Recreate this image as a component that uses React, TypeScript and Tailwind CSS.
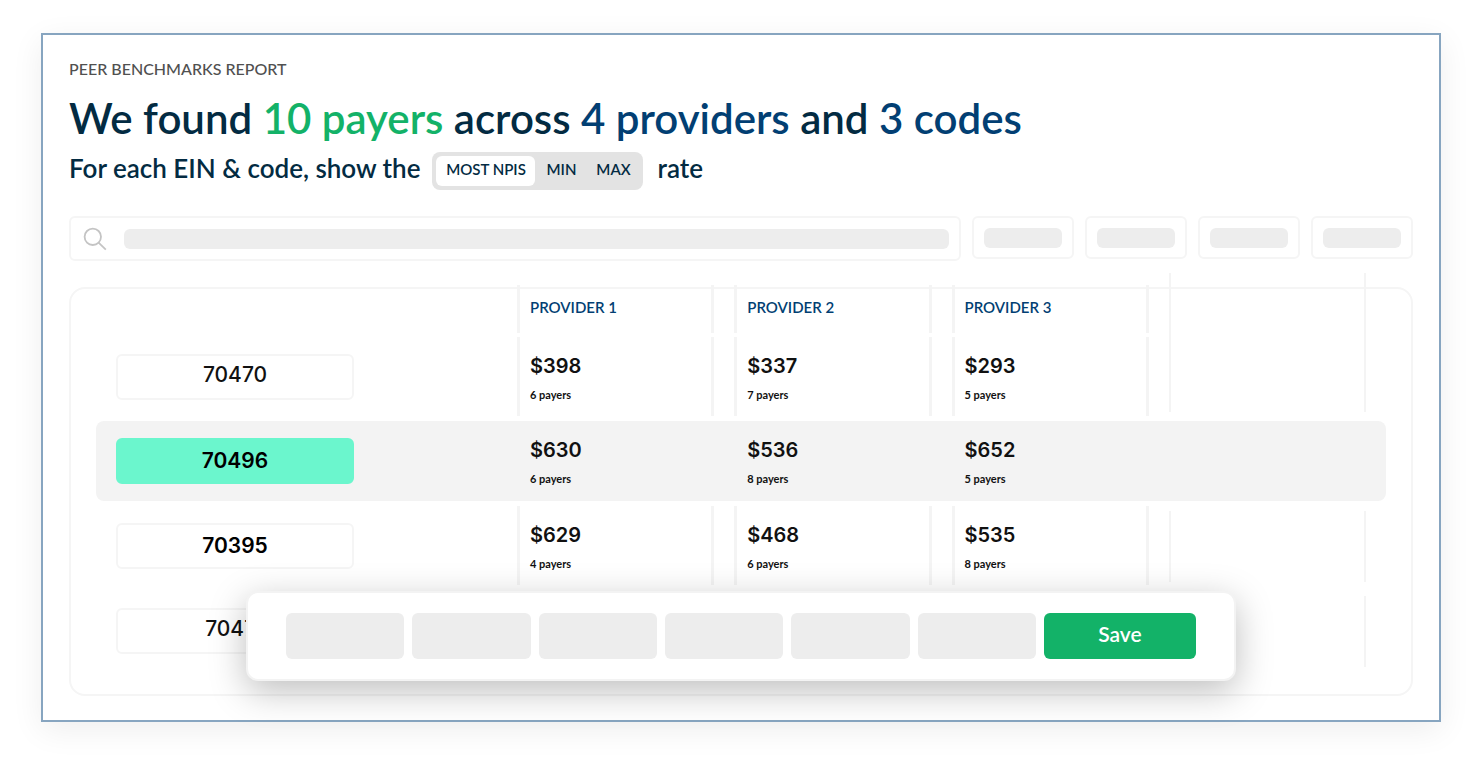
import React from 'react';

interface Rate {
  amount: string;
  payers: string;
}

interface CodeRow {
  code: string;
  rates: Rate[];
  selected?: boolean;
  bold?: boolean;
}

const providers = ['PROVIDER 1', 'PROVIDER 2', 'PROVIDER 3'];

const rows: CodeRow[] = [
  {
    code: '70470',
    rates: [
      { amount: '$398', payers: '6 payers' },
      { amount: '$337', payers: '7 payers' },
      { amount: '$293', payers: '5 payers' },
    ],
  },
  {
    code: '70496',
    selected: true,
    bold: true,
    rates: [
      { amount: '$630', payers: '6 payers' },
      { amount: '$536', payers: '8 payers' },
      { amount: '$652', payers: '5 payers' },
    ],
  },
  {
    code: '70395',
    bold: true,
    rates: [
      { amount: '$629', payers: '4 payers' },
      { amount: '$468', payers: '6 payers' },
      { amount: '$535', payers: '8 payers' },
    ],
  },
  { code: '70471', rates: [] },
];

const filters = ['Filter 1', 'Filter 2', 'Filter 3', 'Filter 4'];
const actions = ['Action 1', 'Action 2', 'Action 3', 'Action 4', 'Action 5', 'Action 6'];

const ReportHeader: React.FC = () => (
  <header>
    <p className="text-base leading-[22px] font-medium text-[#505050]">PEER BENCHMARKS REPORT</p>
    <h1 className="mt-3 text-[42px] leading-[52px] font-semibold text-[#032b42]">
      We found <span className="text-[#13b268]">10 payers</span> across{' '}
      <span className="text-[#023f73]">4 providers</span> and <span className="text-[#023f73]">3 codes</span>
    </h1>
    <div className="mt-2 flex items-start text-[26px] leading-8 font-semibold text-[#032b42]">
      <span>For each EIN &amp; code, show the</span>
      <div className="mr-[14px] ml-3 flex h-[38px] rounded-lg bg-[#e3e3e3] p-1 text-[15px] leading-[26px]">
        <button className="flex w-[99px] justify-center rounded-md bg-white">MOST NPIS</button>
        <button className="flex w-[52px] justify-center">MIN</button>
        <button className="flex w-[52px] justify-center">MAX</button>
      </div>
      <span>rate</span>
    </div>
  </header>
);

const SearchRow: React.FC = () => (
  <div className="mt-[26px] flex items-start gap-[11px]">
    <label className="flex h-[45px] flex-1 items-center rounded-md border-2 border-[#f5f5f5] pr-[10px] pl-3">
      <svg className="h-6 w-6 shrink-0" viewBox="0 0 24 24" fill="none" stroke="#c4c4c4" strokeWidth="1.8">
        <circle cx="9.8" cy="9.8" r="8.2" />
        <path d="M15.6 15.6L22.8 22.6" />
      </svg>
      <input aria-label="Search" className="ml-[17px] h-5 min-w-0 flex-1 rounded-md bg-[#ededed] px-2 text-sm outline-none" />
    </label>
    {filters.map((filter) => (
      <button
        key={filter}
        aria-label={filter}
        className="flex h-[43px] w-[102px] items-center justify-center rounded-md border-2 border-[#f5f5f5]"
      >
        <span className="h-5 w-[78px] rounded-md bg-[#ededed]"></span>
      </button>
    ))}
  </div>
);

const RateCell: React.FC<{ rate?: Rate; selected?: boolean }> = ({ rate, selected }) => (
  <td className="p-0 align-top">
    <div className={selected ? 'h-20 bg-[#f3f3f3] pt-[17px] pl-[13px]' : 'mr-5 h-[79px] border-x-[3px] border-[#f4f4f4] pt-[17px] pl-[10px]'}>
      {rate && (
        <>
          <p className="font-['Inter',sans-serif] text-xl leading-6 font-semibold text-[#111111]">{rate.amount}</p>
          <p className="mt-[9px] text-[11px] leading-4 font-bold text-[#111111]">{rate.payers}</p>
        </>
      )}
    </div>
  </td>
);

// Empty column at the right edge of the table
const SpareCell: React.FC<{ idx: number; selected?: boolean }> = ({ idx, selected }) => {
  let style = 'mt-[5px] mr-5 h-[71px] border-x-2 border-[#f4f4f4]';
  if (idx === 0) style = 'mr-5 h-[75px] border-x-2 border-[#f4f4f4]';
  if (selected) style = 'h-20 rounded-r-lg bg-[#f3f3f3]';
  return (
    <td className="p-0 align-top">
      <div className={style}></div>
    </td>
  );
};

const RatesTable: React.FC = () => (
  <div className="mt-[26px] rounded-2xl border-2 border-[#f5f5f5] px-[25px] pb-[18px]">
    <table className="-mt-1 w-full table-fixed border-separate border-spacing-0 text-left">
      <thead>
        <tr className="h-[52px]">
          <td className="w-[421px] p-0"></td>
          {providers.map((provider) => (
            <th key={provider} className="p-0 align-top">
              <div className="mr-5 h-12 border-x-[3px] border-[#f4f4f4] pt-[10px] pl-[10px] text-[15px] leading-6 font-semibold text-[#023f73]">
                {provider}
              </div>
            </th>
          ))}
          <td className="p-0 align-top">
            <div className="-mt-3 mr-5 h-16 border-x-2 border-[#f4f4f4]"></div>
          </td>
        </tr>
      </thead>
      <tbody>
        {rows.map((row, idx) => (
          <tr key={row.code} className={idx === 0 ? 'h-[84px]' : 'h-[85px]'}>
            <th className="p-0 align-top">
              <div className={row.selected ? 'h-20 rounded-l-lg bg-[#f3f3f3] pt-[17px]' : 'pt-[17px]'}>
                <div
                  className={`ml-5 h-[46px] w-[238px] rounded-md border-2 text-center font-['Inter',sans-serif] text-[21px] ${
                    row.selected ? 'border-[#6bf6cd] bg-[#6bf6cd]' : 'border-[#f5f5f5]'
                  } ${row.bold ? 'leading-[42px] font-semibold text-black' : 'leading-[38px] font-medium text-[#111111]'}`}
                >
                  {row.code}
                </div>
              </div>
            </th>
            {providers.map((provider, col) => (
              <RateCell key={provider} rate={row.rates[col]} selected={row.selected} />
            ))}
            <SpareCell idx={idx} selected={row.selected} />
          </tr>
        ))}
      </tbody>
    </table>
  </div>
);

const ActionBar: React.FC = () => (
  <div className="absolute inset-x-[203px] bottom-[39px] flex gap-2 rounded-xl border-2 border-[#f3f3f3] bg-white px-[38px] py-5 shadow-[0_10px_36px_rgba(0,0,0,0.26)]">
    {actions.map((action) => (
      <button key={action} aria-label={action} className="h-[46px] flex-1 rounded-md bg-[#ededed]"></button>
    ))}
    <button className="h-[46px] w-[152px] rounded-md bg-[#13b268] pb-1 text-[21px] font-semibold text-white">Save</button>
  </div>
);

const App: React.FC = () => {
  return (
    <main className="bg-white pt-[33px] pr-[31px] pb-[50px] pl-[41px] font-['Lato',sans-serif]">
      <section className="relative border-2 border-[#87a5c0] bg-white px-[26px] pt-[23px] pb-6 shadow-[0_8px_30px_rgba(0,0,0,0.07)]">
        <ReportHeader />
        <SearchRow />
        <RatesTable />
        <ActionBar />
      </section>
    </main>
  );
};

export default App;
